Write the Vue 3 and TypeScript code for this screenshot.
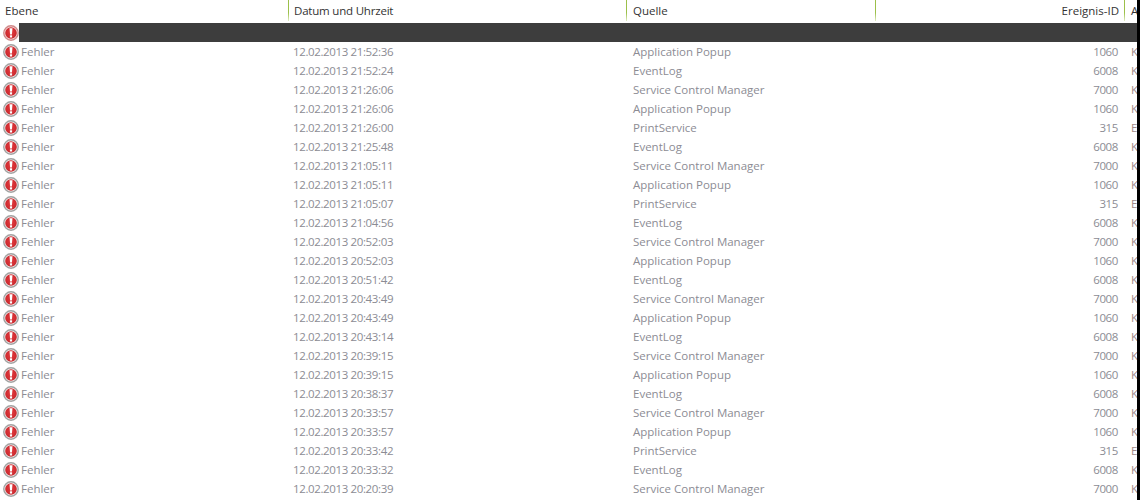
<script setup lang="ts">
interface Row { time: string; source: string; id: string; cat: string }
const src: Record<string, [string, string]> = {
  A: ['Application Popup', '1060'],
  E: ['EventLog', '6008'],
  S: ['Service Control Manager', '7000'],
  P: ['PrintService', '315'],
}
const raw: [string, string][] = [
  ['21:52:36', 'A'], ['21:52:24', 'E'], ['21:26:06', 'S'], ['21:26:06', 'A'], ['21:26:00', 'P'],
  ['21:25:48', 'E'], ['21:05:11', 'S'], ['21:05:11', 'A'], ['21:05:07', 'P'], ['21:04:56', 'E'],
  ['20:52:03', 'S'], ['20:52:03', 'A'], ['20:51:42', 'E'], ['20:43:49', 'S'], ['20:43:49', 'A'],
  ['20:43:14', 'E'], ['20:39:15', 'S'], ['20:39:15', 'A'], ['20:38:37', 'E'], ['20:33:57', 'S'],
  ['20:33:57', 'A'], ['20:33:42', 'P'], ['20:33:32', 'E'], ['20:20:39', 'S'],
]
const rows: Row[] = raw.map(([t, k]) => ({
  time: '12.02.2013 ' + t,
  source: src[k][0],
  id: src[k][1],
  cat: k === 'P' ? 'E' : 'K',
}))
</script>

<template>
  <div class="page">
    <svg width="0" height="0" class="defs">
      <defs>
        <radialGradient id="redfill" cx="50%" cy="45%" r="60%">
          <stop offset="0" stop-color="#e63a3e" />
          <stop offset="1" stop-color="#c4262b" />
        </radialGradient>
      </defs>
    </svg>
    <div class="head">
      <div class="hc c1">Ebene</div>
      <div class="hc c2 sep">Datum und Uhrzeit</div>
      <div class="hc c3 sep">Quelle</div>
      <div class="hc c4 sep">Ereignis-ID</div>
      <div class="hc c5 sep">A</div>
    </div>
    <div class="row selected">
      <div class="sel-icon">
        <svg class="icon" viewBox="0 0 16 16">
          <circle cx="8" cy="8" r="7.2" fill="#f9e4e4" stroke="#d08a8a" stroke-width="1.4" />
          <circle cx="8" cy="8" r="5.8" fill="url(#redfill)" />
          <path d="M6.5 3.2h3l-.6 6.2h-1.8z" fill="#fff" />
          <rect x="6.9" y="10.3" width="2.2" height="2.2" rx="0.5" fill="#fff" />
        </svg>
      </div>
      <div class="bar"></div>
    </div>
    <div v-for="(r, i) in rows" :key="i" class="row">
      <div class="c1 first">
        <svg class="icon" viewBox="0 0 16 16">
          <circle cx="8" cy="8" r="7.2" fill="#f4f4f4" stroke="#a2a2a2" stroke-width="1.4" />
          <circle cx="8" cy="8" r="5.8" fill="url(#redfill)" />
          <path d="M6.5 3.2h3l-.6 6.2h-1.8z" fill="#fff" />
          <rect x="6.9" y="10.3" width="2.2" height="2.2" rx="0.5" fill="#fff" />
        </svg>
        <span class="lvl">Fehler</span>
      </div>
      <div class="c2 cell num">{{ r.time }}</div>
      <div class="c3 cell">{{ r.source }}</div>
      <div class="c4 cell num">{{ r.id }}</div>
      <div class="c5 cell">{{ r.cat }}</div>
    </div>
    <div class="edge"></div>
  </div>
</template>

<style>
html, body { margin: 0; background: #fff; overflow: hidden; }
</style>

<style scoped>
.page {
  position: relative;
  width: 1140px;
  height: 500px;
  overflow: hidden;
  background: #fff;
  font-family: "Open Sans", "Noto Sans", sans-serif;
  font-size: 11.5px;
}
.defs { position: absolute; }
.head {
  display: flex;
  height: 23px;
  line-height: 21px;
  color: #333;
}
.hc { box-sizing: border-box; height: 21px; white-space: nowrap; }
.head .c1 { padding-left: 5px; }
.sep { border-left: 1px solid; border-image: linear-gradient(#9cc04a 60%, #eaf2d5) 1; }
.head .c2 { padding-left: 5px; letter-spacing: -0.2px; }
.head .c3 { padding-left: 6px; }
.head .c4 { padding-right: 5px; }
.head .c5 { padding-left: 6px; }
.c1 { width: 288px; flex: none; }
.c2 { width: 338px; flex: none; }
.c3 { width: 249px; flex: none; }
.c4 { width: 249px; flex: none; text-align: right; }
.c5 { width: 16px; flex: none; }
.row {
  display: flex;
  height: 19px;
  line-height: 19px;
  color: #8c8c94;
  white-space: nowrap;
}
.first { display: flex; align-items: center; }
.sel-icon { display: flex; align-items: center; flex: none; width: 19px; }
.icon { width: 16px; height: 16px; margin-left: 3px; flex: none; }
.lvl { margin-left: 2px; }
.cell { box-sizing: border-box; }
.num { letter-spacing: -0.37px; }
.row .c2 { padding-left: 5px; }
.row .c3 { padding-left: 7px; }
.row .c4 { padding-right: 6px; }
.row .c5 { padding-left: 7px; overflow: hidden; color: #a08a8a; }
.bar { width: 1121px; background: #3d3d3d; }
.edge {
  position: absolute;
  top: 0;
  right: 0;
  width: 3px;
  height: 500px;
  background: #000;
}
</style>
